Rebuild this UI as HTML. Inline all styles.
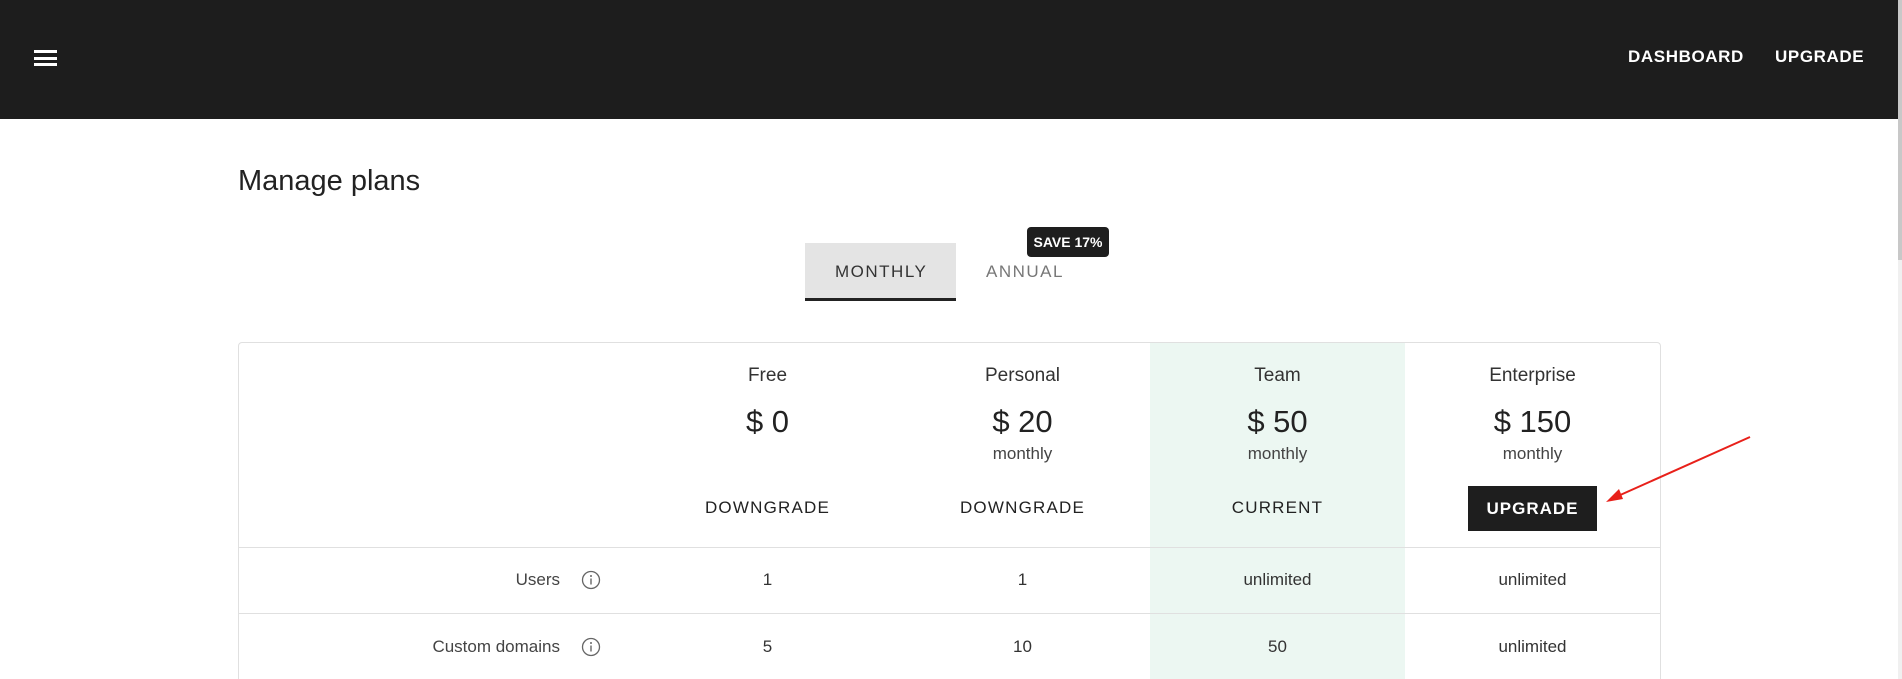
<!DOCTYPE html>
<html style="width:1902px;height:679px;overflow:hidden"><head><meta charset="utf-8"><style>
*{box-sizing:border-box;margin:0;padding:0}
body{width:1902px;height:679px;overflow:hidden;background:#fff;font-family:"Liberation Sans",Arial,sans-serif;color:#222;position:relative}
#w{position:absolute;left:0;top:0;width:1902px;height:679px;overflow:hidden}
.hdr{position:absolute;left:0;top:0;width:1898px;height:119px;background:#1d1d1d}
.sb{position:absolute;right:0;top:0;width:4px;height:679px;background:#f0f0f0}
.sb div{position:absolute;left:0;top:0;width:4px;height:260px;background:#c8c8c8}
.ham{position:absolute;left:34px;top:50px;width:23px;height:16px}
.ham i{display:block;height:3px;background:#fff;margin-bottom:3.5px}
.nav{position:absolute;top:47px;color:#fff;font-weight:bold;font-size:17px;letter-spacing:.6px}
.t{position:absolute;white-space:nowrap}
.c{position:absolute;text-align:center;width:255px}
</style></head><body><div id="w">
<div class="hdr">
<div class="ham"><i></i><i></i><i></i></div>
<div class="nav" style="left:1628px">DASHBOARD</div>
<div class="nav" style="left:1775px">UPGRADE</div>
</div>
<div class="sb"><div></div></div>
<div class="t" style="left:238px;top:165px;font-size:29px;color:#222">Manage plans</div>
<div style="position:absolute;left:805px;top:243px;width:151px;height:58px;background:#e4e4e4;border-bottom:3px solid #222"></div>
<div class="t" style="left:835px;top:262px;font-size:17px;letter-spacing:1.5px;color:#333">MONTHLY</div>
<div class="t" style="left:986px;top:262px;font-size:17px;letter-spacing:1.5px;color:#777">ANNUAL</div>
<div style="position:absolute;left:1027px;top:227px;width:82px;height:30px;background:#1e1e1e;border-radius:4px;color:#fff;font-weight:bold;font-size:14px;line-height:30px;text-align:center">SAVE 17%</div>
<div style="position:absolute;left:238px;top:342px;width:1423px;height:337px;border:1px solid #e0e0e0;border-bottom:none;border-radius:4px 4px 0 0"></div>
<div style="position:absolute;left:1150px;top:343px;width:255px;height:336px;background:#ecf7f2"></div>
<div style="position:absolute;left:239px;top:547px;width:1421px;height:1px;background:#e0e0e0"></div>
<div style="position:absolute;left:239px;top:613px;width:1421px;height:1px;background:#e0e0e0"></div>
<div class="c" style="left:640px;top:365px;font-size:19px;color:#333">Free</div>
<div class="c" style="left:895px;top:365px;font-size:19px;color:#333">Personal</div>
<div class="c" style="left:1150px;top:365px;font-size:19px;color:#333">Team</div>
<div class="c" style="left:1405px;top:365px;font-size:19px;color:#333">Enterprise</div>
<div class="c" style="left:640px;top:404px;font-size:31px">$ 0</div>
<div class="c" style="left:895px;top:404px;font-size:31px">$ 20</div>
<div class="c" style="left:1150px;top:404px;font-size:31px">$ 50</div>
<div class="c" style="left:1405px;top:404px;font-size:31px">$ 150</div>
<div class="c" style="left:895px;top:444px;font-size:17px;color:#444">monthly</div>
<div class="c" style="left:1150px;top:444px;font-size:17px;color:#444">monthly</div>
<div class="c" style="left:1405px;top:444px;font-size:17px;color:#444">monthly</div>
<div class="c" style="left:640px;top:498px;font-size:17px;letter-spacing:1.2px;color:#222">DOWNGRADE</div>
<div class="c" style="left:895px;top:498px;font-size:17px;letter-spacing:1.2px;color:#222">DOWNGRADE</div>
<div class="c" style="left:1150px;top:498px;font-size:17px;letter-spacing:1.2px;color:#222">CURRENT</div>
<div style="position:absolute;left:1468px;top:486px;width:129px;height:45px;background:#1e1e1e;color:#fff;font-weight:bold;font-size:17px;letter-spacing:1px;line-height:45px;text-align:center">UPGRADE</div>
<div class="t" style="right:1342px;top:570px;font-size:17px;color:#444">Users</div>
<div class="t" style="right:1342px;top:637px;font-size:17px;color:#444">Custom domains</div>
<svg style="position:absolute;left:581px;top:570px" width="20" height="20" viewBox="0 0 20 20"><circle cx="10" cy="10" r="8.5" fill="none" stroke="#666" stroke-width="1.3"/><circle cx="10" cy="6" r="1" fill="#666"/><rect x="9.3" y="8.5" width="1.4" height="6" fill="#666"/></svg>
<svg style="position:absolute;left:581px;top:637px" width="20" height="20" viewBox="0 0 20 20"><circle cx="10" cy="10" r="8.5" fill="none" stroke="#666" stroke-width="1.3"/><circle cx="10" cy="6" r="1" fill="#666"/><rect x="9.3" y="8.5" width="1.4" height="6" fill="#666"/></svg>
<div class="c" style="left:640px;top:570px;font-size:17px;color:#333">1</div>
<div class="c" style="left:895px;top:570px;font-size:17px;color:#333">1</div>
<div class="c" style="left:1150px;top:570px;font-size:17px;color:#333">unlimited</div>
<div class="c" style="left:1405px;top:570px;font-size:17px;color:#333">unlimited</div>
<div class="c" style="left:640px;top:637px;font-size:17px;color:#333">5</div>
<div class="c" style="left:895px;top:637px;font-size:17px;color:#333">10</div>
<div class="c" style="left:1150px;top:637px;font-size:17px;color:#333">50</div>
<div class="c" style="left:1405px;top:637px;font-size:17px;color:#333">unlimited</div>
<svg style="position:absolute;left:0;top:0" width="1902" height="679"><line x1="1750" y1="437" x2="1618" y2="496" stroke="#e8201a" stroke-width="2"/><polygon points="1606,502 1619,489 1623,499" fill="#e8201a"/></svg>
</div></body></html>
